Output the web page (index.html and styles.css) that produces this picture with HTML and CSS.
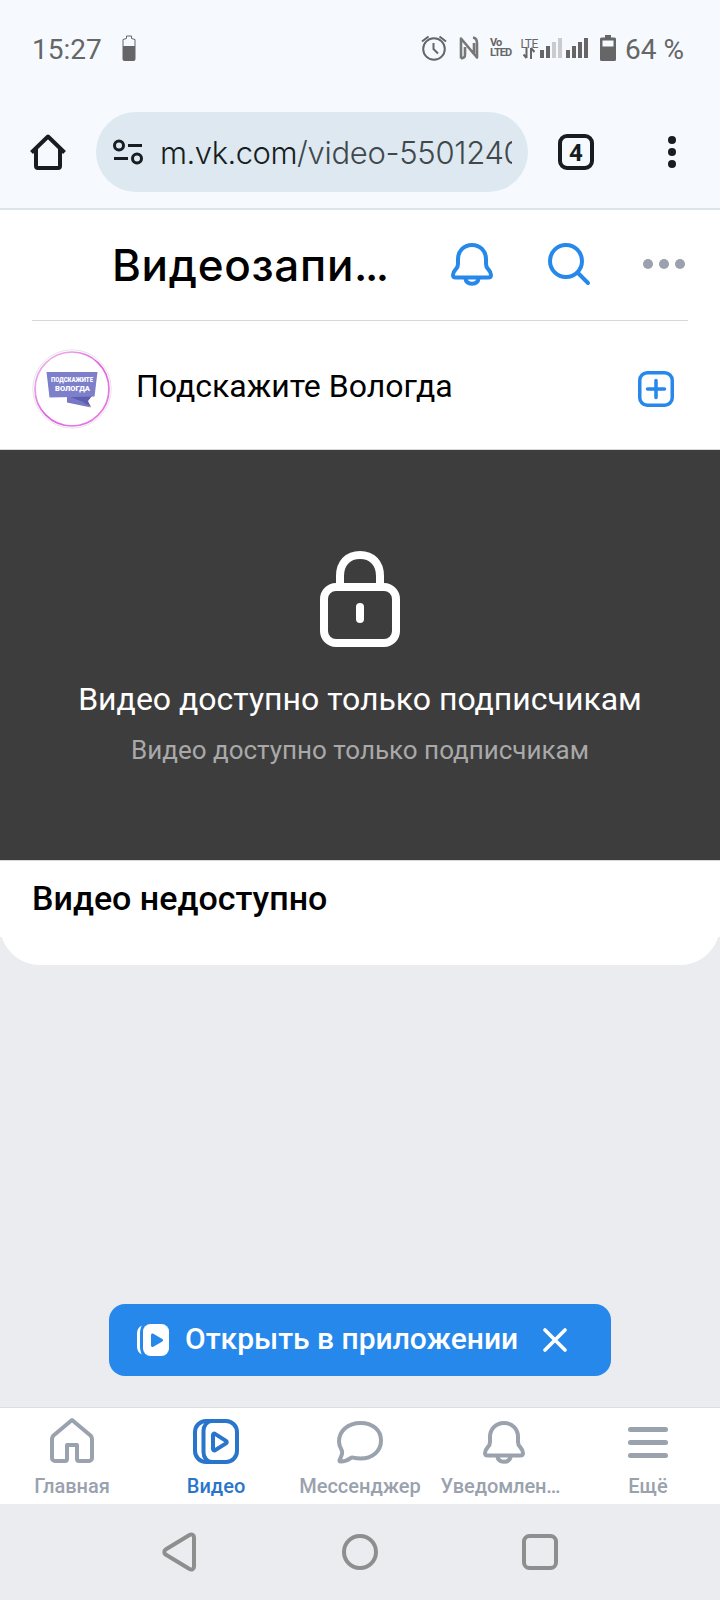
FILE: index.html
```html
<!DOCTYPE html>
<html lang="ru">
<head>
    <meta charset="UTF-8">
    <meta name="viewport" content="width=device-width, initial-scale=1.0">
    <title>Видеозаписи</title>
    <link rel="stylesheet" href="styles.css">
</head>
<body>

<div class="status-bar">
    <span class="clock">15:27</span>
    <svg class="battery-small" width="14" height="26" viewBox="0 0 14 26">
        <path d="M1 11V4.500L4.500 3.500V1h5v2.500l3.500 1V11" fill="none" stroke="#666"/>
        <path d="M.5 11h13v13a2 2 0 0 1-2 2h-9a2 2 0 0 1-2-2z" fill="#666"/>
    </svg>
    <div class="status-icons">
        <svg width="26" height="26" viewBox="0 0 26 26" fill="none" stroke="#666" stroke-width="2">
            <circle cx="13" cy="14" r="10.800"/>
            <path d="M12.500 8v6l4.500 4.500M1 6.500L7.500 1.500M25 6.500l-6.500-5"/>
        </svg>
        <svg class="nfc" width="20" height="26" viewBox="0 0 20 26" fill="none" stroke="#777" stroke-width="2.600">
            <path d="M2 23.500V3.500l13 15.500V8M2 23.500c3.500-.8 4-1.500 4-4V12M2 3.500L18 22.500V8c0-3-1-5-4-5.500" stroke-linejoin="round"/>
        </svg>
        <div class="volte"><span>Vo</span><span>LTED</span></div>
        <div class="lte">
            <span>LTE</span>
            <svg width="12" height="12" viewBox="0 0 12 12" fill="none" stroke="#666" stroke-width="2">
                <path d="M3.500 0v11M.5 7.500l3 3.500M8 12V1M8 1l3.500 4"/>
            </svg>
        </div>
        <svg class="signal" width="48" height="20" viewBox="0 0 48 20" fill="#666">
            <path d="M0 12h4v8H0zM6 8h4v12H6zM26 12h4v8h-4zM32 8h4v12h-4zM38 4h4v16h-4zM44 0h4v20h-4z"/>
            <path d="M12 4h4v16h-4zM18 0h4v20h-4z" fill="#cacbce"/>
        </svg>
        <svg class="battery" width="16" height="26" viewBox="0 0 16 26">
            <path fill="#666" fill-rule="evenodd" d="M5 0h6v2.500h3.500A1.500 1.500 0 0 1 16 4v20.500a1.500 1.500 0 0 1-1.500 1.500h-13A1.500 1.500 0 0 1 0 24.500V4a1.500 1.500 0 0 1 1.500-1.500H5zM2.500 5.500v6h11v-6z"/>
        </svg>
        <span class="percent">64 %</span>
    </div>
</div>

<div class="browser-bar">
    <svg width="36" height="36" viewBox="0 0 36 36" fill="none" stroke="#171d20" stroke-width="4" stroke-linejoin="round">
        <path d="M6 14v18a2 2 0 0 0 2 2h20a2 2 0 0 0 2-2V14M1.500 18.500L18 2.500l16.500 16"/>
    </svg>
    <div class="address">
        <svg width="30" height="26" viewBox="0 0 30 26" fill="none" stroke="#171d20" stroke-width="3">
            <circle cx="6" cy="6.500" r="4.500"/>
            <path d="M15 6.500h14M1 19.500h14"/>
            <circle cx="24" cy="19.500" r="4.500"/>
        </svg>
        <div class="url">m.vk.com<span>/video-5501240</span></div>
    </div>
    <div class="tab-count">4</div>
    <svg class="menu-dots" width="8" height="32" viewBox="0 0 8 32" fill="#171d20">
        <circle cx="4" cy="4" r="4"/><circle cx="4" cy="16" r="4"/><circle cx="4" cy="28" r="4"/>
    </svg>
</div>

<div class="page">
    <header class="header">
        <h1>Видеозапи<span>...</span></h1>
        <svg class="bell" width="42" height="44" viewBox="0 0 42 44" fill="none" stroke="#2688eb" stroke-width="4" stroke-linejoin="round">
            <path id="bell" d="M21 2C12.500 2 7 8.500 7 16v5c0 2.500-.8 3.800-2.200 5.200C3 28.200 2 29.800 2 32c0 1.500 1 2.500 2.800 2.500h32.400c1.800 0 2.800-1 2.800-2.500 0-2.200-1-3.800-2.800-5.800C35.800 24.800 35 23.500 35 21v-5C35 8.500 29.500 2 21 2zM14.200 35c.6 3.600 3 5.800 6.800 5.800s6.200-2.200 6.800-5.800"/>
        </svg>
        <svg class="search" width="43" height="43" viewBox="0 0 43 43" fill="none" stroke="#2688eb" stroke-width="4" stroke-linecap="round">
            <circle cx="18" cy="18" r="16"/>
            <path d="M29.500 29.500l10.500 10.500"/>
        </svg>
        <svg width="42" height="10" viewBox="0 0 42 10" fill="#99a2ad">
            <circle cx="5" cy="5" r="5"/><circle cx="21" cy="5" r="5"/><circle cx="37" cy="5" r="5"/>
        </svg>
    </header>

    <div class="author">
        <svg width="80" height="80" viewBox="0 0 80 80">
            <defs>
                <linearGradient id="ring" x1="0" y1="0" x2="1" y2="1">
                    <stop offset="0" stop-color="#efb0ee"/>
                    <stop offset=".22" stop-color="#eba0ea"/>
                    <stop offset=".5" stop-color="#e45fe0"/>
                    <stop offset=".85" stop-color="#e779e3"/>
                    <stop offset="1" stop-color="#efb0ee"/>
                </linearGradient>
            </defs>
            <circle cx="40" cy="40" r="39.200" fill="#fff" stroke="#e5e5e8"/>
            <circle cx="40" cy="40" r="37" fill="none" stroke="url(#ring)" stroke-width="1.700"/>
            <path d="M35 47l24 11-3-6 4-5z" fill="#5c5faf"/>
            <path d="M35 47v6.500l24 5-9-6z" fill="#7678c5"/>
            <path d="M14.500 23h51l-3 24.500-45 1z" fill="#7d7fcb"/>
            <text x="19" y="33" textLength="42" lengthAdjust="spacingAndGlyphs">ПОДСКАЖИТЕ</text>
            <text x="23" y="42" textLength="35" lengthAdjust="spacingAndGlyphs">ВОЛОГДА</text>
        </svg>
        <span class="author-name">Подскажите Вологда</span>
        <svg class="subscribe" width="36" height="36" viewBox="0 0 36 36" fill="none" stroke="#2688eb" stroke-width="3.500" stroke-linecap="round">
            <rect x="1.750" y="1.750" width="32.500" height="32.500" rx="7.500"/>
            <path d="M9.500 18h17M18 9.500v17"/>
        </svg>
    </div>

    <div class="player">
        <svg width="80" height="96" viewBox="0 0 80 96" fill="none" stroke="#fff" stroke-width="8">
            <rect x="4" y="36" width="72" height="56" rx="12"/>
            <path d="M20 34V25C20 12 28 4 40 4s20 8 20 21v9"/>
            <path d="M40 56v12" stroke-linecap="round"/>
        </svg>
        <p class="player-title">Видео доступно только подписчикам</p>
        <p class="player-text">Видео доступно только подписчикам</p>
    </div>

    <div class="info">
        <h2>Видео недоступно</h2>
    </div>
    <div class="info-bottom"></div>

    <div class="open-app">
        <svg width="32" height="32" viewBox="0 0 32 32">
            <rect x="6" width="26" height="32" rx="7.500" fill="#fff"/>
            <path d="M14 11v10.500c0 1.200 1.200 2 2.300 1.300l9-5.200c1-.6 1-2 0-2.600l-9-5.300C15.200 9 14 9.800 14 11z" fill="#2688eb"/>
            <path d="M4.800 1.500C2 3 0 5.500 0 9.500v13c0 4 2 6.500 4.800 8-.9-2-1.800-4.500-1.800-8v-13c0-3.500.9-6 1.800-8z" fill="#fff"/>
        </svg>
        <span>Открыть в приложении</span>
        <svg class="close" width="24" height="24" viewBox="0 0 24 24" fill="none" stroke="#fff" stroke-width="3.600" stroke-linecap="round">
            <path d="M2 2l20 20M22 2L2 22"/>
        </svg>
    </div>
</div>

<nav class="tabbar">
    <a class="tab">
        <svg width="48" height="48" viewBox="0 0 48 48" fill="none" stroke="currentColor" stroke-width="4" stroke-linejoin="round">
            <path d="M24 4L5.500 19.500C4.500 20.500 4 21.500 4 23v19a3 3 0 0 0 3 3h10a2 2 0 0 0 2-2V29h10v14a2 2 0 0 0 2 2h10a3 3 0 0 0 3-3V23c0-1.500-.5-2.500-1.500-3.500z"/>
        </svg>
        <span>Главная</span>
    </a>
    <a class="tab active">
        <svg width="48" height="48" viewBox="0 0 48 48" fill="none" stroke="currentColor" stroke-width="4" stroke-linejoin="round">
            <rect x="3" y="5" width="42" height="41" rx="11"/>
            <path d="M20 5c-5 0-8.500 4.500-8.500 10v21c0 5.500 3.500 10 8.500 10"/>
            <path d="M21 19v14c0 1.300 1 1.800 2 1.200l11-6.800c1-.7 1-1.800 0-2.500l-11-7c-1-.7-2-.2-2 1.100z"/>
        </svg>
        <span>Видео</span>
    </a>
    <a class="tab">
        <svg width="48" height="48" viewBox="0 0 48 48" fill="none" stroke="currentColor" stroke-width="4" stroke-linejoin="round">
            <path d="M24.500 7C12 7 3 15 3 25.500c0 3.500 1.200 6 2.500 8.200.8 1.400 1 2.300.6 3.800-.5 2-1.200 4-2.500 6.500-.4 1 0 1.500 1 1.500 4 0 7.500-1.500 10-3.400.8-.6 1.500-.8 2.600-.5 2.200.6 4.600.9 7.300.9C36.500 42.500 45 35 45 24.500S36.500 7 24.500 7z"/>
        </svg>
        <span>Мессенджер</span>
    </a>
    <a class="tab">
        <svg width="48" height="48" viewBox="0 0 48 48" fill="none" stroke="currentColor" stroke-width="4" stroke-linejoin="round">
            <use href="#bell" x="3" y="5"/>
        </svg>
        <span class="clipped">Уведомлен…</span>
    </a>
    <a class="tab">
        <svg width="48" height="48" viewBox="0 0 48 48" fill="none" stroke="currentColor" stroke-width="5" stroke-linecap="round">
            <path d="M6.500 13.500h35M6.500 26.500h35M6.500 39.500h35"/>
        </svg>
        <span>Ещё</span>
    </a>
</nav>

<div class="system-nav">
    <svg width="36" height="40" viewBox="0 0 36 40"><path d="M27.500 3L4 17.200c-2.300 1.400-2.300 4.200 0 5.600L27.500 37c2.300 1.200 4.500.2 4.500-2.500v-29C32 2.800 29.800 1.800 27.500 3z"/></svg>
    <svg width="36" height="40" viewBox="0 0 36 40"><circle cx="18" cy="20" r="16"/></svg>
    <svg width="36" height="40" viewBox="0 0 36 40"><rect x="2" y="4" width="32" height="32" rx="5.500"/></svg>
</div>

</body>
</html>
```
FILE: styles.css
```css
* {
    box-sizing: border-box;
}

body {
    margin: 0;
    width: 720px;
    height: 1600px;
    display: flex;
    flex-direction: column;
    overflow: hidden;
    font-family: Roboto, sans-serif;
    background-color: #ebecf0;
    color: #000;
}

svg {
    display: block;
    flex: none;
}

h1, h2, p {
    margin: 0;
    font-weight: 400;
    white-space: nowrap;
}

.status-bar {
    height: 96px;
    padding: 2px 36px 0 32px;
    display: flex;
    align-items: center;
    background-color: #f6f9fe;
    color: #666;
    font-size: 28px;
}

.battery-small {
    margin: -2px 0 0 20px;
}

.status-icons {
    margin-left: auto;
    display: flex;
    align-items: center;
}

.status-icons svg {
    margin-top: -2px;
}

.nfc {
    margin-left: 12px;
}

.volte {
    margin: -2px 0 0 11px;
    width: 22px;
    display: flex;
    flex-direction: column;
    font-size: 11px;
    font-weight: 700;
    line-height: 10px;
    letter-spacing: -0.9px;
}

.lte {
    margin: 0 0 0 7px;
    width: 20px;
    display: flex;
    flex-direction: column;
    align-items: center;
    font-size: 12px;
    line-height: 10px;
    letter-spacing: -0.5px;
}

.signal {
    margin-left: 1px;
}

.battery {
    margin: 0 9px 0 12px;
}

.browser-bar {
    height: 114px;
    padding: 0 44px 0 30px;
    display: flex;
    align-items: center;
    background-color: #f6f9fe;
    border-bottom: 2px solid #dce4eb;
}

.address {
    width: 432px;
    height: 80px;
    margin-left: 30px;
    padding: 0 16px 0 17px;
    display: flex;
    align-items: center;
    border-radius: 40px;
    background-color: #dde8f0;
}

.url {
    width: 352px;
    margin-left: 17px;
    overflow: hidden;
    white-space: nowrap;
    font-family: Inter, sans-serif;
    font-size: 31px;
    font-weight: 350;
    letter-spacing: -0.5px;
    color: #171d20;
}

.url span {
    letter-spacing: -0.3px;
    color: #40484c;
}

.tab-count {
    width: 36px;
    height: 36px;
    margin-left: 30px;
    border: 4px solid #171d20;
    border-radius: 9px;
    font-size: 24px;
    font-weight: 700;
    line-height: 30px;
    text-align: center;
    color: #171d20;
}

.menu-dots {
    margin-left: auto;
}

.page {
    flex: 1;
    display: flex;
    flex-direction: column;
}

.header {
    height: 111px;
    padding: 0 35px 3px 112px;
    display: flex;
    align-items: center;
    background: linear-gradient(#d7d8d9, #d7d8d9) 32px 110px / 656px 1px no-repeat #fff;
}

.header h1 {
    width: 339px;
    margin-top: 2px;
    font-family: Inter, sans-serif;
    font-size: 44px;
    font-weight: 450;
    letter-spacing: 0.7px;
}

.header h1 span {
    letter-spacing: -2.5px;
}

.bell {
    margin-top: 2px;
}

.search {
    margin: 1px 52px 0 55px;
}

.author {
    height: 129px;
    padding: 8px 46px 0 32px;
    display: flex;
    align-items: center;
    background-color: #fff;
    border-bottom: 1px solid #d7d8d9;
}

.author text {
    font-size: 8px;
    font-weight: 900;
    fill: #fff;
}

.author-name {
    margin: -6px 0 0 24px;
    font-size: 32px;
}

.subscribe {
    margin-left: auto;
}

.player {
    height: 410px;
    padding-top: 101px;
    display: flex;
    flex-direction: column;
    align-items: center;
    background-color: #3d3d3d;
    color: #fff;
}

.player-title {
    margin-top: 33px;
    font-size: 32px;
    line-height: 38px;
}

.player-text {
    margin-top: 17px;
    font-size: 26px;
    line-height: 30px;
    color: #a9a9a9;
}

.info {
    height: 77px;
    padding: 17px 32px 0;
    border-top: 1px solid #d7d8d9;
    background-color: #fff;
}

.info h2 {
    font-size: 34px;
    font-weight: 500;
    line-height: 40px;
}

/* bottom of a 40px corner, cut where the text block ends */
.info-bottom {
    height: 28px;
    background:
        radial-gradient(circle at 40px -12px, #fff 39.500px, transparent 40.500px) 0 0 / 40px 28px no-repeat,
        radial-gradient(circle at 0 -12px, #fff 39.500px, transparent 40.500px) 100% 0 / 40px 28px no-repeat,
        linear-gradient(#fff, #fff) 40px 0 / 640px 28px no-repeat;
}

.open-app {
    width: 502px;
    height: 72px;
    margin: auto auto 31px;
    padding: 0 44px 0 28px;
    display: flex;
    align-items: center;
    border-radius: 16px;
    background-color: #2688eb;
    color: #fff;
    font-size: 30px;
    font-weight: 500;
}

.open-app span {
    margin: -3px 0 0 16px;
}

.close {
    margin-left: auto;
}

.tabbar {
    height: 97px;
    display: flex;
    border-top: 1px solid #dcdde1;
    background-color: #fff;
}

.tab {
    width: 144px;
    padding-top: 8px;
    display: flex;
    flex-direction: column;
    align-items: center;
    font-size: 20px;
    font-weight: 500;
    line-height: 24px;
    color: #99a2ad;
}

.tab span {
    margin-top: 10px;
}

.tab .clipped {
    margin-right: 7px;
    letter-spacing: -0.1px;
}

.active {
    color: #2975cc;
}

.system-nav {
    height: 96px;
    display: flex;
    justify-content: center;
    align-items: center;
    gap: 144px;
    fill: none;
    stroke: #8e8e8e;
    stroke-width: 4;
}
```
